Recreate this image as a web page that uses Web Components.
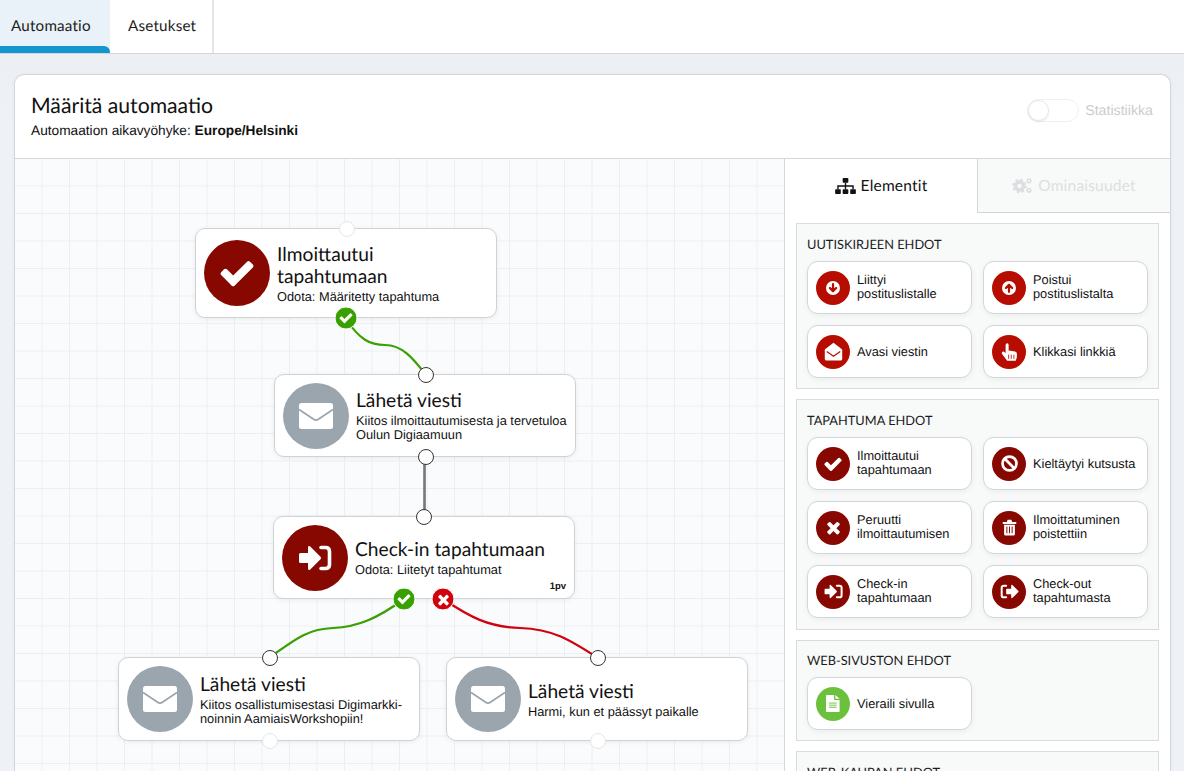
<!DOCTYPE html>
<html lang="fi">
<head>
<meta charset="utf-8">
<title>Automaatio</title>
<style>
    html, body { margin: 0; height: 100%; overflow: hidden; }
    body { font-family: "Liberation Sans", Arial, sans-serif; color: #111; background: #eef1f4; text-rendering: geometricPrecision; font-variant-ligatures: none; }
</style>
</head>
<body>
<app-page>
    <tab-bar>
        <tab-item active>Automaatio</tab-item>
        <tab-item>Asetukset</tab-item>
    </tab-bar>
    <auto-card>
        <card-head slot="head"></card-head>
        <flow-canvas slot="canvas">
            <flow-node x="180" y="69" h="90" icon="check" tone="#870800" title="Ilmoittautui tapahtumaan">Odota: Määritetty tapahtuma</flow-node>
            <flow-node x="259" y="215" h="83" icon="envelope" tone="#9aa5ad" title="Lähetä viesti">Kiitos ilmoittautumisesta ja tervetuloa<br>Oulun Digiaamuun</flow-node>
            <flow-node x="258" y="357" h="83" icon="signin" tone="#870800" title="Check-in tapahtumaan" badge="1pv">Odota: Liitetyt tapahtumat</flow-node>
            <flow-node x="103" y="498" h="84" icon="envelope" tone="#9aa5ad" title="Lähetä viesti">Kiitos osallistumisestasi Digimarkki-<br>noinnin AamiaisWorkshopiin!</flow-node>
            <flow-node x="431" y="498" h="84" icon="envelope" tone="#9aa5ad" title="Lähetä viesti">Harmi, kun et päässyt paikalle</flow-node>

            <svg width="769" height="612" viewBox="15 159 769 612" fill="none" stroke-width="2.200">
                <path stroke="#38a000" d="M345 318C360 340 370 345 385 345C402 345 413 358 426 375"/>
                <path stroke="#777" stroke-width="2.600" d="M424.500 457V517"/>
                <path stroke="#38a000" d="M404 599C378 618 358 627 333 628C306 629 293 641 269 658"/>
                <path stroke="#d0020e" d="M443 599C470 617 488 627 520 628C553 629 570 640 598 658"/>
            </svg>

            <flow-port x="331.500" y="70" kind="light"></flow-port>
            <flow-port x="411" y="215.500" kind="open"></flow-port>
            <flow-port x="411" y="298" kind="open"></flow-port>
            <flow-port x="409" y="357.500" kind="open"></flow-port>
            <flow-port x="254.500" y="499" kind="open"></flow-port>
            <flow-port x="254.500" y="582" kind="light"></flow-port>
            <flow-port x="583" y="499" kind="open"></flow-port>
            <flow-port x="583" y="582" kind="light"></flow-port>
            <flow-port x="330.500" y="159" kind="yes"></flow-port>
            <flow-port x="389" y="440" kind="yes"></flow-port>
            <flow-port x="428" y="440" kind="no"></flow-port>
        </flow-canvas>
        <side-panel slot="side">
            <rule-section title="Uutiskirjeen ehdot">
                <rule-button icon="down" tone="#b70d00">Liittyi<br>postituslistalle</rule-button>
                <rule-button icon="up" tone="#b70d00">Poistui<br>postituslistalta</rule-button>
                <rule-button icon="open" tone="#b70d00">Avasi viestin</rule-button>
                <rule-button icon="hand" tone="#b70d00">Klikkasi linkkiä</rule-button>
            </rule-section>
            <rule-section title="Tapahtuma ehdot" style="padding-bottom: 11px">
                <rule-button icon="check" tone="#870800">Ilmoittautui<br>tapahtumaan</rule-button>
                <rule-button icon="ban" tone="#870800">Kieltäytyi kutsusta</rule-button>
                <rule-button icon="times" tone="#870800">Peruutti<br>ilmoittautumisen</rule-button>
                <rule-button icon="trash" tone="#870800">Ilmoittatuminen<br>poistettiin</rule-button>
                <rule-button icon="signin" tone="#870800">Check-in<br>tapahtumaan</rule-button>
                <rule-button icon="signout" tone="#870800">Check-out<br>tapahtumasta</rule-button>
            </rule-section>
            <rule-section title="Web-sivuston ehdot" style="padding-top: 9px">
                <rule-button icon="file" tone="#6cc13c">Vieraili sivulla</rule-button>
            </rule-section>
            <rule-section title="Web-kaupan ehdot"></rule-section>
        </side-panel>
    </auto-card>
</app-page>

<script>
const HEAD_FONT = 'Lato, "Noto Sans", sans-serif';

// icons are drawn white on the circle, the circle colour is passed in for the cut-out details
const ICONS = {
    check: (w) => `<svg width="${w}" height="${w}" viewBox="0 0 1792 1792"><path fill="#fff" d="M1671 566q0 40-28 68l-724 724-136 136q-28 28-68 28t-68-28l-136-136-362-362q-28-28-28-68t28-68l136-136q28-28 68-28t68 28l294 295 656-657q28-28 68-28t68 28l136 136q28 28 28 68z"/></svg>`,
    times: (w) => `<svg width="${w}" height="${w}" viewBox="0 0 1792 1792"><path fill="#fff" d="M1490 1322q0 40-28 68l-136 136q-28 28-68 28t-68-28l-294-294-294 294q-28 28-68 28t-68-28l-136-136q-28-28-28-68t28-68l294-294-294-294q-28-28-28-68t28-68l136-136q28-28 68-28t68 28l294 294 294-294q28-28 68-28t68 28l136 136q28 28 28 68t-28 68l-294 294 294 294q28 28 28 68z"/></svg>`,
    envelope: (w, c) => `<svg width="${w}" height="${w * 26 / 34}" viewBox="0 0 34 26"><rect width="34" height="26" rx="2.500" fill="#fff"/><path d="M0 6.500 15 16.500Q17 17.800 19 16.500L34 6.500" fill="none" stroke="${c}" stroke-width="1.800"/></svg>`,
    signin: (w) => `<svg width="${w}" height="${w}" viewBox="0 0 34 34"><path fill="#fff" d="M1 13.500q0-1.500 1.500-1.500H10V6.500q0-2 2-1.200L22.500 15.700q1.300 1.300 0 2.600L12 28.700q-2 .8-2-1.200V22H2.500Q1 22 1 20.500z"/><path fill="none" stroke="#fff" stroke-width="3.600" stroke-linecap="round" d="M23 6.500h4.500q4 0 4 4v13q0 4-4 4H23"/></svg>`,
    signout: (w) => `<svg width="${w}" height="${w}" viewBox="0 0 34 34"><path fill="#fff" d="M11 13.500q0-1.500 1.500-1.500H20V6.500q0-2 2-1.200L32.500 15.700q1.300 1.300 0 2.600L22 28.700q-2 .8-2-1.200V22h-7.500Q11 22 11 20.500z"/><path fill="none" stroke="#fff" stroke-width="3.600" stroke-linecap="round" d="M11 6.500H7q-4 0-4 4v13q0 4 4 4h4"/></svg>`,
    down: (w, c) => `<svg width="${w}" height="${w}" viewBox="0 0 20 20"><circle cx="10" cy="10" r="10" fill="#fff"/><path fill="none" stroke="${c}" stroke-width="3.200" stroke-linecap="round" stroke-linejoin="round" d="M10 4.500V14M5.500 10 10 14.500 14.500 10"/></svg>`,
    up: (w, c) => `<svg width="${w}" height="${w}" viewBox="0 0 20 20"><circle cx="10" cy="10" r="10" fill="#fff"/><path fill="none" stroke="${c}" stroke-width="3.200" stroke-linecap="round" stroke-linejoin="round" d="M10 15.500V6M5.500 10 10 5.500 14.500 10"/></svg>`,
    open: (w, c) => `<svg width="${w}" height="${w}" viewBox="0 0 24 24"><path fill="#fff" d="M1 9.500 12 1l11 8.500V21.500q0 2-2 2H3q-2 0-2-2z"/><path fill="none" stroke="${c}" stroke-width="1.500" d="M3.500 12 12 18l8.500-6"/></svg>`,
    hand: (w, c) => `<svg width="${w}" height="${w}" viewBox="0 0 24 24"><path fill="#fff" d="M7.500 2.500q0-2.300 2-2.300t2 2.300V10l8.500 1.200q2.500.5 2.500 3v4q0 1-.5 2.300L21 23.500H9.500L3 15q-1.500-2 .2-3.200 1.600-1 3 .5l1.300 1.500z"/><path stroke="${c}" stroke-width="1.100" d="M11.500 15.500v5.500M15 15.500v5.500M18.500 15.500v5.500"/></svg>`,
    ban: (w) => `<svg width="${w}" height="${w}" viewBox="0 0 20 20"><circle cx="10" cy="10" r="8.200" fill="none" stroke="#fff" stroke-width="3.200"/><path stroke="#fff" stroke-width="3.200" d="M4.500 4.500 15.500 15.500"/></svg>`,
    trash: (w, c) => `<svg width="${w}" height="${w * 1.100}" viewBox="0 0 20 22"><path fill="#fff" d="M1 4h18v2.500H1zM6.500 4l1-3h5l1 3zM2.800 7.500h14.400V20q0 2-2 2H4.800q-2 0-2-2z"/><path stroke="${c}" stroke-width="1.300" d="M6.500 10v9M10 10v9M13.500 10v9"/></svg>`,
    file: (w, c) => `<svg width="${w * .8}" height="${w}" viewBox="0 0 16 20"><path fill="#fff" d="M0 1q0-1 1-1h8.500v6H16v13q0 1-1 1H1q-1 0-1-1z"/><path fill="#fff" d="M11 0l5 4.500h-5z"/><path stroke="${c}" stroke-width="1.100" d="M3.500 9.500h9M3.500 12h9M3.500 14.500h9"/></svg>`
};

const defineSimple = (name, css, html) => {
    customElements.define(name, class extends HTMLElement {
        constructor() {
            super();
            this.attachShadow({mode: "open"}).innerHTML = `<style>${css}</style>${html}`;
        }
    });
};

defineSimple('app-page', `
    :host { display: flex; flex-direction: column; height: 100vh; overflow: hidden;
            background: linear-gradient(#ebeef1, #eef1f5 120px); }
`, `<slot></slot>`);

defineSimple('tab-bar', `
    :host { display: flex; flex: none; height: 54px; box-sizing: border-box; background: #fff; border-bottom: 1px solid #d3d7db; }
`, `<slot></slot>`);

class TabItem extends HTMLElement {
    constructor() {
        super();
        this.attachShadow({mode: "open"}).innerHTML = `
            <style>
                :host { display: flex; align-items: center; position: relative; width: 104px; box-sizing: border-box;
                        padding: 0 0 2px 18px; border-right: 2px solid #e3e6e9;
                        font: 15.200px ${HEAD_FONT}; letter-spacing: .2px; color: #1c1c1c; }
                :host([active]) { width: 110px; padding-left: 11px; border-right: 0; background: #e8f2f8; }
                :host([active])::after { content: ""; position: absolute; left: 0; right: 0; bottom: 0; height: 7px;
                        background: #1296d0; border-top-right-radius: 6px; }
            </style>
            <slot></slot>`;
    }
}
customElements.define('tab-item', TabItem);

defineSimple('auto-card', `
    :host { display: flex; flex-direction: column; flex: 1; min-height: 0; margin: 20px 13px 0 14px;
            background: #fff; border: 1px solid #d3d7db; border-bottom: 0; border-radius: 10px 10px 0 0;
            box-shadow: 0 0 5px rgba(0,0,0,.04); overflow: hidden; }
    .body { display: flex; flex: 1; min-height: 0; border-top: 1px solid #d3d7db; }
`, `<slot name="head"></slot><div class="body"><slot name="canvas"></slot><slot name="side"></slot></div>`);

defineSimple('card-head', `
    :host { display: flex; justify-content: space-between; align-items: flex-start; height: 83px;
            box-sizing: border-box; padding: 17px 17px 0 16px; }
    h1 { margin: 0; font: 400 21.200px/27px ${HEAD_FONT}; color: #111; }
    p { margin: 2px 0 0; font-size: 13.700px; line-height: 19px; color: #111; }
    .stat { display: flex; align-items: center; gap: 6px; margin-top: 7px; font-size: 14.200px; color: #c9cdd0; }
    .toggle { width: 52px; height: 23px; box-sizing: border-box; border: 1px solid #eef0f1; border-radius: 12px; position: relative; }
    .toggle::before { content: ""; position: absolute; left: 0; top: 0; width: 21px; height: 21px; background: #fff;
            border: 1px solid #e6e8ea; border-radius: 50%; box-sizing: border-box; box-shadow: 0 1px 2px rgba(0,0,0,.08); }
`, `<div><h1>Määritä automaatio</h1><p>Automaation aikavyöhyke: <b>Europe/Helsinki</b></p></div>
    <div class="stat"><span class="toggle"></span>Statistiikka</div>`);

defineSimple('flow-canvas', `
    :host { display: block; position: relative; width: 769px; flex: none; overflow: hidden; background-color: #fafbfc;
            background-image: linear-gradient(to right, #eceff2 1px, transparent 1px),
                              linear-gradient(to bottom, #eceff2 1px, transparent 1px);
            background-size: 27.500px 27.500px; background-position: -1px -1px; }
    ::slotted(svg) { position: absolute; left: 0; top: 0; }
`, `<slot></slot>`);

class FlowNode extends HTMLElement {
    constructor() {
        super();
        const tone = this.getAttribute('tone');
        const icon = this.getAttribute('icon');
        const iconSize = {check: 38, envelope: 34, signin: 34}[icon];
        const badge = this.getAttribute('badge');
        this.attachShadow({mode: "open"}).innerHTML = `
            <style>
                :host { display: flex; align-items: center; gap: 7px; position: absolute; box-sizing: border-box;
                        left: ${this.getAttribute('x')}px; top: ${this.getAttribute('y')}px;
                        width: 302px; height: ${this.getAttribute('h') || 91}px; padding: 0 8px;
                        background: #fff; border: 1px solid #d0d3d6; border-radius: 10px; box-shadow: 0 1px 5px rgba(0,0,0,.07); }
                .dot { flex: none; width: 66px; height: 66px; border-radius: 50%; background: ${tone};
                       display: flex; align-items: center; justify-content: center; }
                .txt { margin-top: 1px; }
                h2 { margin: 0 0 2px; font: 400 19.200px/22px ${HEAD_FONT}; color: #111; }
                .sub { font-size: 12.800px; line-height: 14px; color: #111; }
                .badge { position: absolute; right: 8px; bottom: 6px; font-size: 9.500px; font-weight: 700; color: #111; }
            </style>
            <div class="dot">${ICONS[icon](iconSize, tone)}</div>
            <div class="txt"><h2>${this.getAttribute('title')}</h2><div class="sub"><slot></slot></div></div>
            ${badge ? `<span class="badge">${badge}</span>` : ''}`;
    }
}
customElements.define('flow-node', FlowNode);

class FlowPort extends HTMLElement {
    constructor() {
        super();
        const kind = this.getAttribute('kind');
        const big = kind === 'yes' || kind === 'no';
        const bg = {yes: '#38a000', no: '#d0020e'}[kind] || '#fff';
        const border = {open: '1.200px solid #333', light: '1px solid #e4e6e8'}[kind] || '1px solid #fff';
        const inner = kind === 'yes' ? ICONS.check(15) : kind === 'no' ? ICONS.times(16) : '';
        this.attachShadow({mode: "open"}).innerHTML = `
            <style>
                :host { display: flex; align-items: center; justify-content: center; position: absolute; box-sizing: border-box;
                        left: ${this.getAttribute('x')}px; top: ${this.getAttribute('y')}px; transform: translate(-50%, -50%);
                        width: ${big ? 23 : 16}px; height: ${big ? 23 : 16}px; border-radius: 50%;
                        background: ${bg}; border: ${border}; }
            </style>${inner}`;
    }
}
customElements.define('flow-port', FlowPort);

defineSimple('side-panel', `
    :host { display: block; flex: 1; min-width: 0; border-left: 1px solid #d3d7db; overflow: hidden; }
    .tabs { display: flex; height: 54px; }
    .tab { flex: 1; display: flex; align-items: center; justify-content: center; gap: 5px;
           font: 15.500px ${HEAD_FONT}; letter-spacing: .2px; color: #111; }
    .off { color: #dcdfe1; background: #f8f9f9; border-left: 1px solid #d3d7db; border-bottom: 1px solid #d3d7db; }
    .list { display: flex; flex-direction: column; gap: 10px; padding: 10px 11px 0 11px; }
`, `<div class="tabs">
        <div class="tab">
            <svg width="21" height="16" viewBox="0 0 22 17" fill="#111"><rect x="8" width="6" height="5" rx=".8"/><rect y="12" width="6" height="5" rx=".8"/><rect x="8" y="12" width="6" height="5" rx=".8"/><rect x="16" y="12" width="6" height="5" rx=".8"/><path fill="none" stroke="#111" stroke-width="1.500" d="M11 5v7M3 12V8.500h16V12"/></svg>
            Elementit
        </div>
        <div class="tab off">
            <svg width="21" height="17" viewBox="0 0 21 17" fill="none" stroke="#dcdfe1"><circle cx="7.500" cy="9" r="4" stroke-width="3.500"/><circle cx="7.500" cy="9" r="6.300" stroke-width="2" stroke-dasharray="2.500 2.450"/><circle cx="17" cy="3.800" r="1.800" stroke-width="1.600"/><circle cx="17" cy="13.300" r="1.800" stroke-width="1.600"/></svg>
            Ominaisuudet
        </div>
    </div>
    <div class="list"><slot></slot></div>`);

class RuleSection extends HTMLElement {
    constructor() {
        super();
        this.attachShadow({mode: "open"}).innerHTML = `
            <style>
                :host { display: block; box-sizing: border-box; background: #f8f9f9; border: 1px solid #d9dcdf;
                        width: 363px; padding: 10px; flex: none; }
                h3 { margin: 0 0 7px; font: 400 12.800px/20px ${HEAD_FONT}; color: #1c1c1c; text-transform: uppercase; }
                .grid { display: grid; grid-template-columns: 165px 165px; gap: 11px; }
            </style>
            <h3>${this.getAttribute('title')}</h3>
            <div class="grid"><slot></slot></div>`;
    }
}
customElements.define('rule-section', RuleSection);

class RuleButton extends HTMLElement {
    constructor() {
        super();
        const tone = this.getAttribute('tone');
        const icon = this.getAttribute('icon');
        const size = {down: 14, up: 14, open: 19, hand: 18, check: 20, ban: 17, times: 19, trash: 15, signin: 19, signout: 19, file: 17}[icon];
        const twoLines = this.innerHTML.includes('<br');
        this.attachShadow({mode: "open"}).innerHTML = `
            <style>
                :host { display: flex; align-items: center; gap: 7px; box-sizing: border-box; height: 53px; padding: 0 8px;
                        background: #fff; border: 1px solid #d3d6d9; border-radius: 11px;
                        box-shadow: 0 2px 6px rgba(0,0,0,.05); font-size: 12.800px; line-height: 14px; color: #111; }
                .dot { flex: none; width: 34px; height: 34px; border-radius: 50%; background: ${tone};
                       display: flex; align-items: center; justify-content: center; }
                .txt { margin-bottom: ${twoLines ? 1 : 0}px; }
            </style>
            <div class="dot">${ICONS[icon](size, tone)}</div>
            <div class="txt"><slot></slot></div>`;
    }
}
customElements.define('rule-button', RuleButton);
</script>
</body>
</html>
